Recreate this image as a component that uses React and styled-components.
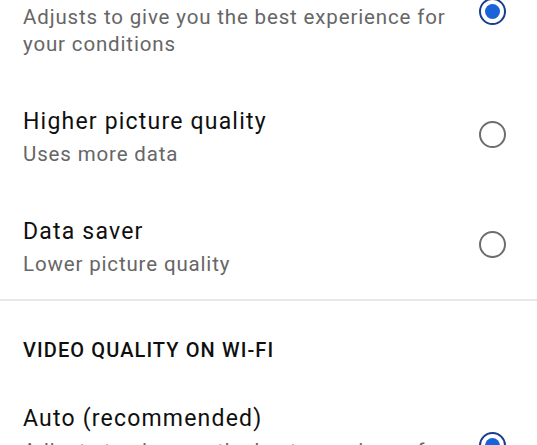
import React from 'react'
import styled, { createGlobalStyle } from 'styled-components'

const GlobalStyle = createGlobalStyle`
    html, body {
        margin: 0;
        padding: 0;
        background: #fff;
    }
    body {
        font-family: Roboto, "Noto Sans", sans-serif;
        -webkit-font-smoothing: antialiased;
    }
`

const Viewport = styled.div`
    width: 537px;
    height: 445px;
    overflow: hidden;
    background: #fff;
`

// the list is scrolled, so the first row sits partly above the window
const Scroller = styled.div`
    margin-top: -54px;
`

const Section = styled.section`
    display: flex;
    flex-direction: column;
`

const SectionHeader = styled.h3`
    margin: 0;
    padding: 35px 23px 18px;
    font-size: 20px;
    line-height: 24px;
    font-weight: 500;
    color: #0f0f0f;
    letter-spacing: 1.1px;
`

const Divider = styled.div`
    height: 2px;
    background: #e8e8e8;
    margin-top: -4px;
    margin-bottom: 2px;
`

const Row = styled.label`
    display: flex;
    align-items: center;
    justify-content: space-between;
    padding: 24px 31px 25px 23px;
    cursor: pointer;
`

const Texts = styled.div`
    display: flex;
    flex-direction: column;
    max-width: 440px;
`

const Title = styled.div`
    font-size: 23px;
    line-height: 30px;
    letter-spacing: 1.2px;
    color: #0f0f0f;
`

const Subtitle = styled.div`
    margin-top: 4px;
    font-size: 20.5px;
    line-height: 27px;
    letter-spacing: 0.85px;
    color: #666;
`

const Radio = styled.span`
    flex: none;
    box-sizing: border-box;
    width: 27px;
    height: 27px;
    margin-bottom: 6px;
    border-radius: 50%;
    border: 2.6px solid ${p => (p.$checked ? '#173f8e' : '#6d6d6d')};
    display: flex;
    align-items: center;
    justify-content: center;

    &::after {
        content: '';
        display: ${p => (p.$checked ? 'block' : 'none')};
        width: 15px;
        height: 15px;
        border-radius: 50%;
        background: #1a62d8;
    }
`

const options = [
    { id: 'auto', title: 'Auto (recommended)', sub: 'Adjusts to give you the best experience for your conditions' },
    { id: 'high', title: 'Higher picture quality', sub: 'Uses more data' },
    { id: 'saver', title: 'Data saver', sub: 'Lower picture quality' },
]

const Option = ({ title, sub, checked }) => (
    <Row>
        <Texts>
            <Title>{title}</Title>
            <Subtitle>{sub}</Subtitle>
        </Texts>
        <Radio $checked={checked} />
    </Row>
)

export default function App() {
    return (
        <Viewport>
            <GlobalStyle />
            <Scroller>
                <Section>
                    {options.map(o => (
                        <Option key={o.id} {...o} checked={o.id === 'auto'} />
                    ))}
                </Section>
                <Divider />
                <Section>
                    <SectionHeader>VIDEO QUALITY ON WI-FI</SectionHeader>
                    {options.map(o => (
                        <Option key={o.id} {...o} checked={o.id === 'auto'} />
                    ))}
                </Section>
            </Scroller>
        </Viewport>
    )
}
